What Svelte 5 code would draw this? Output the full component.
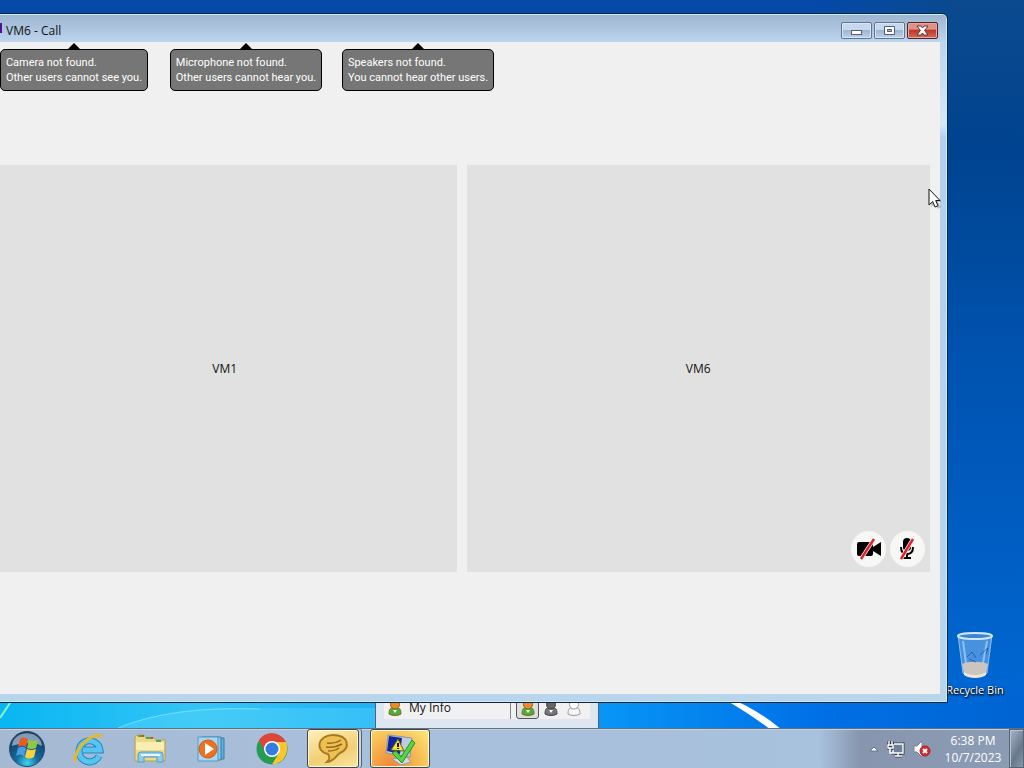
<script lang="ts">
	interface Notice {
		title: string;
		detail: string;
	}

	const notices: Notice[] = [
		{ title: 'Camera not found.', detail: 'Other users cannot see you.' },
		{ title: 'Microphone not found.', detail: 'Other users cannot hear you.' },
		{ title: 'Speakers not found.', detail: 'You cannot hear other users.' }
	];

	const statuses = [
		{ name: 'Available', fill: '#f08a24', body: '#4fae35', line: '#7a6a2a' },
		{ name: 'Away', fill: '#666', body: '#777', line: '#444' },
		{ name: 'Offline', fill: '#fff', body: '#f4f4f4', line: '#999' }
	];

	let status = $state('Available');
</script>

{#snippet person(fill: string, body: string, line: string)}
	<svg width="14" height="18" viewBox="0 0 14 18" aria-hidden="true">
		<path d="M1 16c0-4 1-6 3-6h6c2 0 3 2 3 6-3 2-9 2-12 0z" fill={body} stroke={line} />
		<circle cx="7" cy="6.5" r="4.5" fill={fill} stroke={line} />
		<path d="M5 12l2 3 2-3z" fill="#fff" />
	</svg>
{/snippet}

<div class="screen">
	<main class="desktop">
		<svg class="wallpaper" viewBox="0 0 1024 728" preserveAspectRatio="none" aria-hidden="true">
			<defs>
				<linearGradient id="side" x1="0" y1="0" x2="0" y2="1">
					<stop offset="0" stop-color="#0b4a8e" />
					<stop offset=".2" stop-color="#00438f" />
					<stop offset=".5" stop-color="#0053b0" />
					<stop offset="1" stop-color="#0069d6" />
				</linearGradient>
				<linearGradient id="floor">
					<stop offset="0" stop-color="#08b6f2" />
					<stop offset=".2" stop-color="#35c5f6" />
					<stop offset=".38" stop-color="#1cb0f6" />
					<stop offset=".6" stop-color="#0793f5" />
					<stop offset=".8" stop-color="#0070e6" />
					<stop offset="1" stop-color="#0064d2" />
				</linearGradient>
				<linearGradient id="sky">
					<stop offset=".85" stop-color="#0549a9" />
					<stop offset="1" stop-color="#0549a9" stop-opacity="0" />
				</linearGradient>
			</defs>
			<rect width="1024" height="728" fill="url(#side)" />
			<rect width="960" height="14" fill="url(#sky)" />
			<rect y="696" width="1024" height="32" fill="url(#floor)" />
			<path d="M118 728Q170 706 250 708L375 708V728z" fill="#5bd4fa" opacity=".4" />
			<path d="M118 728Q170 706 260 709" fill="none" stroke="#8be4fc" opacity=".7" />
			<path d="M0 718L12 700" stroke="#8cf5c0" stroke-width="2" />
			<path d="M729 698Q757 709 782 730L771 730Q750 714 724 699z" fill="#fff" />
		</svg>

		<figure class="recycle-bin">
			<svg width="40" height="48" viewBox="0 0 40 48" aria-hidden="true">
				<path d="M3 4l5 38c3 5 21 5 24 0l5-38z" fill="#6fa9e6" fill-opacity=".65" stroke="#8dc0ee" />
				<path d="M7 33c5-3 20-3 26 0l-2 9c-4 4-18 4-22 0z" fill="#cbc5bd" />
				<path d="M9 41c5 4 17 4 22 0v3c-5 4-17 4-22 0z" fill="#eee5dc" />
				<ellipse cx="20" cy="5" rx="17" ry="3" fill="#4186cb" stroke="#d0e8f4" stroke-width="2" />
				<path d="M8 10l3 22M32 10l-4 22" stroke="#bce0fa" stroke-width="2" opacity=".6" />
				<path d="M12 26l5-5 4 6m4-3l8-7-2 6m-17 5l7 3" fill="none" stroke="#174d9b" opacity=".7" />
			</svg>
			<figcaption>Recycle Bin</figcaption>
		</figure>

		<section class="contacts" aria-label="Contacts">
			<div class="contacts-bar">
				<div class="my-info">
					{@render person('#f08a24', '#4fae35', '#7a6a2a')}
					<span>My Info</span>
				</div>
				{#each statuses as item}
					<button
						class="status"
						class:selected={status === item.name}
						aria-label={item.name}
						onclick={() => (status = item.name)}
					>
						{@render person(item.fill, item.body, item.line)}
					</button>
				{/each}
			</div>
		</section>

		<section class="window" aria-label="VM6 - Call">
			<header class="titlebar">
				<span class="app-icon"></span>
				<h1>VM6 - Call</h1>
				<div class="window-controls">
					<button aria-label="Minimize">
						<svg width="13" height="11" viewBox="0 0 13 11"><rect x="1.5" y="5.5" width="10" height="4" fill="#fff" stroke="#555e70" /></svg>
					</button>
					<button aria-label="Maximize">
						<svg width="13" height="11" viewBox="0 0 13 11">
							<path d="M1.5 1.5h10v8h-10zM4.5 4.5v2h4v-2z" fill="#fff" fill-rule="evenodd" stroke="#555e70" />
						</svg>
					</button>
					<button class="close" aria-label="Close">
						<svg width="13" height="11" viewBox="0 0 13 11">
							<path d="M1 1h4l1.5 2L8 1h4L8.600 5.500 12 10H8L6.500 8 5 10H1l3.400-4.500z" fill="#fff" stroke="#67343a" />
						</svg>
					</button>
				</div>
			</header>

			<div class="call">
				<div class="notices">
					{#each notices as notice}
						<div class="notice-slot">
							<span class="arrow"></span>
							<p class="notice" role="status">{notice.title}<br />{notice.detail}</p>
						</div>
					{/each}
				</div>
				<div class="tiles">
					<div class="tile"><span>VM1</span></div>
					<div class="tile">
						<span>VM6</span>
						<div class="tile-controls">
							<button aria-label="Camera off">
								<svg width="26" height="24" viewBox="0 0 26 24">
									<path d="M3 5h12q2 0 2 2v3l8-5v14l-8-5v3q0 2-2 2H3q-2 0-2-2V7q0-2 2-2z" fill="#000" />
									<path d="M5 22L18 2" stroke="#fff" stroke-width="4" />
									<path d="M5 22L18 2" stroke="#e3202c" stroke-width="2.500" />
								</svg>
							</button>
							<button aria-label="Microphone off">
								<svg width="26" height="24" viewBox="0 0 26 24">
									<rect x="8" y="1" width="8" height="13" rx="4" fill="#000" />
									<path d="M6 10q0 7 6 7t6-7M12 17v4M8 21h8" fill="none" stroke="#000" stroke-width="2" />
									<path d="M6 22L18 2" stroke="#fff" stroke-width="4" />
									<path d="M6 22L18 2" stroke="#e3202c" stroke-width="2.500" />
								</svg>
							</button>
						</div>
					</div>
				</div>
			</div>
		</section>

		<svg class="cursor" width="14" height="21" viewBox="0 0 14 21" aria-hidden="true">
			<path d="M3 3v16l4-3 3 5 3-2-3-5h4z" fill="#000" opacity=".2" />
			<path d="M1 1v16l3.700-3.500L7 19l3-1.200-2.300-5.300H12z" fill="#fff" stroke="#111" />
		</svg>
	</main>

	<footer class="taskbar">
		<button class="start" aria-label="Start">
			<svg width="38" height="38" viewBox="0 0 38 38">
				<defs>
					<radialGradient id="orb" cx=".5" cy=".9" r=".8">
						<stop offset="0" stop-color="#3cd5ef" />
						<stop offset=".4" stop-color="#136a9f" />
						<stop offset="1" stop-color="#173a61" />
					</radialGradient>
				</defs>
				<circle cx="19" cy="19" r="17.500" fill="url(#orb)" stroke="#294a6c" />
				<path d="M4 16C5-1 33-1 34 16 27 11 12 13 4 16z" fill="#dceaf5" opacity=".55" />
				<path d="M12 9q4-3 8 0l-2 8q-4-3-8 0z" fill="#ee5a25" />
				<path d="M21 10q4 2 9 0l-2 8q-5 2-9 0z" fill="#92c83e" />
				<path d="M10 18q4-3 8 0l-2 8q-4-3-8 0z" fill="#4c9de0" />
				<path d="M19 19q4 2 9 0l-2 8q-5 3-9 0z" fill="#fbd13b" />
			</svg>
		</button>
		<nav class="tasks" aria-label="Taskbar">
			<button aria-label="Internet Explorer">
				<svg width="34" height="34" viewBox="0 0 34 34">
					<path d="M27 24A10.500 10.500 0 1 1 28 18H11" fill="none" stroke="#2387c4" stroke-width="7" />
					<path d="M27 24A10.500 10.500 0 1 1 28 18H11" fill="none" stroke="#56c5f1" stroke-width="5" />
					<path d="M4 30C-1 23 16 0 30 4" fill="none" stroke="#eab822" stroke-width="3" />
				</svg>
			</button>
			<button aria-label="Windows Explorer">
				<svg width="34" height="32" viewBox="0 0 34 32">
					<path d="M2 4l2-2h7l2 3h8l2 2h9v21H2z" fill="#ecd985" stroke="#b9a052" />
					<path d="M5 3h4M13 5h5M23 8h5" stroke="#53a546" stroke-width="2" />
					<path d="M9 3h2M18 5h2" stroke="#cc4b32" stroke-width="2" />
					<path d="M3 9h28v8H3z" fill="#faeeb2" />
					<path d="M5 29V22q0-3 3-3h19q3 0 3 3v7h-6v-5H11v5z" fill="#91cdea" stroke="#4f9ac6" />
					<path d="M8 22h19" stroke="#e5f7ff" stroke-width="2" />
				</svg>
			</button>
			<button aria-label="Windows Media Player">
				<svg width="30" height="30" viewBox="0 0 30 30">
					<path d="M9 4h19v21H9z" fill="#63add8" stroke="#347fae" />
					<path d="M6 3h19v23H6z" fill="#8ac8e8" stroke="#347fae" />
					<path d="M2 3h20v24H2z" fill="#a9d5ed" stroke="#5799bf" />
					<circle cx="12" cy="15" r="9" fill="#ee711f" stroke="#c9591b" />
					<path d="M9 9l9 6-9 6z" fill="#fff" />
				</svg>
			</button>
			<button aria-label="Google Chrome">
				<svg width="32" height="32" viewBox="0 0 32 32">
					<circle cx="16" cy="16" r="15.500" fill="#279b52" />
					<path d="M30 9H16l7 11-7 11.500C27 31 34 20 30 9z" fill="#fdc52b" />
					<path d="M3 7.500L9.500 19 16 9h14C24-2 9-3 3 7.500z" fill="#dd4638" />
					<circle cx="16" cy="16" r="8" fill="#fff" />
					<circle cx="16" cy="16" r="6.500" fill="#347de0" />
				</svg>
			</button>
			<button class="running grouped" aria-label="Messenger">
				<svg width="34" height="34" viewBox="0 0 34 34">
					<path d="M12 22C-2 19 2 3 17 3c16 0 18 14 7 18-3 1-5 8-13 9 3-3 3-5 1-8z" fill="#eec053" stroke="#a87a20" stroke-width="2" />
					<path d="M11 11q8 1 14-3M10 15q9 1 16-3M12 19q7 0 11-3" fill="none" stroke="#9a6b16" stroke-width="1.500" />
				</svg>
			</button>
			<button class="running attention" aria-label="System tools">
				<svg width="34" height="34" viewBox="0 0 34 34">
					<path d="M9 27l15-2 4 5-10 3z" fill="#d5d9df" stroke="#929ba8" />
					<path d="M5 3l24 3-2 19-24-4z" fill="#bfcbdc" stroke="#8696ad" />
					<path d="M6 4l13 2-2 16-13-3z" fill="#14259c" />
					<path d="M15 7l6 12-13-1z" fill="#f9e235" stroke="#635b19" />
					<path d="M15 11v4M15 16v1" stroke="#111" stroke-width="2" />
					<path d="M9 21l4-2 5 6L29 8l3 3-13 20z" fill="#57d541" stroke="#22912c" />
				</svg>
			</button>
		</nav>
		<div class="tray">
			<button aria-label="Show hidden icons">
				<svg width="10" height="6" viewBox="0 0 10 6"><path d="M1 5l4-4 4 4z" fill="#fff" stroke="#66758b" /></svg>
			</button>
			<button aria-label="Network">
				<svg width="18" height="18" viewBox="0 0 18 18">
					<path d="M6 4h10v9H6zM8 16h7M2 1v4M5 1v4M1 5h5v3H1z" fill="#718196" stroke="#303b49" stroke-width="3" />
					<path d="M6 4h10v9H6z" fill="#718196" />
					<path d="M7 4h9v9H6v-3M8 16h7M11 13v3M2 1v4M5 1v4M1 5h5v3H1zM3 8v5h3" fill="none" stroke="#fff" stroke-width="1.400" />
				</svg>
			</button>
			<button aria-label="Volume: no device">
				<svg width="18" height="18" viewBox="0 0 18 18">
					<path d="M1 6h3l5-5v16l-5-5H1z" fill="#fff" stroke="#778399" />
					<circle cx="12" cy="11" r="5" fill="#d5292c" stroke="#b41d21" />
					<path d="M10 9l4 4M14 9l-4 4" stroke="#fff" stroke-width="2" />
				</svg>
			</button>
			<time class="clock" datetime="2023-10-07T18:38">6:38 PM<br />10/7/2023</time>
		</div>
		<button class="show-desktop" aria-label="Show desktop"></button>
	</footer>
</div>

<style>
	:global(body) {
		margin: 0;
	}

	.screen {
		display: flex;
		flex-direction: column;
		height: 100vh;
		overflow: hidden;
		font-family: 'Open Sans', 'Noto Sans', sans-serif;
		font-size: 11px;
		line-height: 15px;
		color: #111;
	}

	.screen * {
		box-sizing: border-box;
	}

	button {
		display: flex;
		align-items: center;
		justify-content: center;
		padding: 0;
		border: 0;
		background: none;
		font: inherit;
	}

	.desktop {
		position: relative;
		flex: 1;
		min-height: 0;
		overflow: hidden;
		background: #0052ad;
	}

	.wallpaper {
		display: block;
		width: 100%;
		height: 100%;
	}

	.recycle-bin {
		position: absolute;
		right: 12px;
		bottom: 31px;
		display: flex;
		flex-direction: column;
		align-items: center;
		gap: 3px;
		width: 74px;
		margin: 0;
		color: #fff;
		text-shadow: 1px 1px 2px #000, 0 1px 2px #000;
		white-space: nowrap;
	}

	/* call window, partly dragged off the left side */
	.window {
		position: absolute;
		top: 13px;
		right: 76px;
		bottom: 25px;
		left: -26px;
		display: flex;
		flex-direction: column;
		padding: 0 7px 8px 8px;
		border: 1px solid #10253e;
		border-radius: 6px 6px 0 0;
		background: linear-gradient(#9db4cf, #bcd4ed 28px, #d5e8f8 110px, #b3d0ec 124px, #b8d5ec);
		box-shadow: inset 0 0 0 1px #c4ecfa;
	}

	.titlebar {
		display: flex;
		align-items: center;
		height: 28px;
	}

	.app-icon {
		width: 19px;
		height: 10px;
		margin-right: 4px;
		background: #521197;
	}

	h1 {
		flex: 1;
		margin: 0;
		padding-top: 5px;
		font-size: 12px;
		font-weight: 400;
		line-height: 16px;
	}

	.window-controls {
		display: flex;
		gap: 2px;
		padding: 4px 2px 0 0;
	}

	.window-controls button {
		width: 31px;
		height: 17px;
		border: 1px solid #61738d;
		border-radius: 2px;
		background: linear-gradient(#c6d8ed 45%, #9db5d3 50%, #bdd2ea);
		box-shadow: inset 0 0 0 1px #d8e7f5;
	}

	.window-controls .close {
		border-color: #57232c;
		background: linear-gradient(#de9187 40%, #bd382b 50%, #d26b55);
		box-shadow: inset 0 0 0 1px #e5a69c;
	}

	.call {
		display: flex;
		flex: 1;
		flex-direction: column;
		min-height: 0;
		padding: 1px 10px 122px;
		background: #f0f0f0;
	}

	.notices {
		display: flex;
		margin: 0 -5px 74px;
		font-family: Roboto, 'Open Sans', sans-serif;
	}

	.notice-slot {
		display: flex;
		flex-direction: column;
		align-items: center;
		width: 172px;
	}

	.arrow {
		border: 6px solid transparent;
		border-top: 0;
		border-bottom-color: #000;
	}

	.notice {
		margin: 0;
		padding: 5px;
		border: 1px solid #000;
		border-radius: 5px;
		background: #767676;
		color: #fff;
		white-space: nowrap;
	}

	.tiles {
		display: flex;
		flex: 1;
		gap: 10px;
	}

	.tile {
		position: relative;
		display: flex;
		flex: 1;
		align-items: center;
		justify-content: center;
		background: #e1e1e1;
		font-size: 12px;
	}

	.tile-controls {
		position: absolute;
		right: 5px;
		bottom: 5px;
		display: flex;
		gap: 4px;
	}

	.tile-controls button {
		width: 35px;
		height: 36px;
		border-radius: 50%;
		background: #f7f7f5;
	}

	.contacts {
		position: absolute;
		bottom: 0;
		left: 375px;
		width: 224px;
		padding: 8px 8px 9px;
		border: 1px solid #4b6280;
		border-bottom: 0;
		background: #dde6f1;
	}

	.contacts-bar {
		display: flex;
		align-items: center;
		height: 26px;
		padding-right: 5px;
		background: #f1f1f2;
	}

	.my-info {
		display: flex;
		flex: 1;
		align-items: center;
		gap: 7px;
		height: 26px;
		margin-right: 5px;
		padding: 2px 0 0 4px;
		border-right: 1px solid #888;
		font-size: 12px;
	}

	.status {
		width: 23px;
		height: 26px;
		padding-top: 2px;
		border: 1px solid transparent;
		border-radius: 3px;
	}

	.status.selected {
		border-color: #555;
		background: #dedede;
	}

	.cursor {
		position: absolute;
		top: 188px;
		right: 82px;
	}

	.taskbar {
		display: flex;
		flex: none;
		height: 40px;
		border-top: 1px solid #5d7186;
		background: linear-gradient(90deg, #a6b9d2, #a8bfdb 35%, #a8c1dd 80%, #8796ae 84%, #8c9cb4);
		box-shadow: inset 0 1px #c3d3e3;
	}

	.start {
		width: 54px;
		margin-right: 5px;
	}

	.tasks {
		display: flex;
		flex: 1;
		gap: 1px;
	}

	.tasks button {
		width: 60px;
	}

	.tasks .running {
		border: 1px solid #3e4752;
		border-radius: 3px;
		background: linear-gradient(160deg, #fff0bb, #f2cf75 60%, #fae5a0);
		box-shadow: inset 0 0 0 1px #fff7d0;
	}

	.tasks .grouped {
		width: 52px;
		margin: 0 10px 0 4px;
		box-shadow: inset 0 0 0 1px #fff7d0, 2px 0 #c9d6e4, 3px 0 #52606e;
	}

	.tasks .attention {
		background: radial-gradient(circle at 35% 100%, #ee853a, #f6b24d 45%, #fae173 90%);
	}

	.tray {
		display: flex;
		align-items: center;
		gap: 8px;
		padding-right: 2px;
	}

	.clock {
		width: 68px;
		color: #fff;
		font-size: 12px;
		line-height: 17px;
		text-align: center;
	}

	.show-desktop {
		width: 15px;
		border: 1px solid #566579;
		background: linear-gradient(120deg, #aab5c4, #68788c 60%, #8796a8);
		box-shadow: inset 1px 1px #b7c3d0;
	}
</style>
